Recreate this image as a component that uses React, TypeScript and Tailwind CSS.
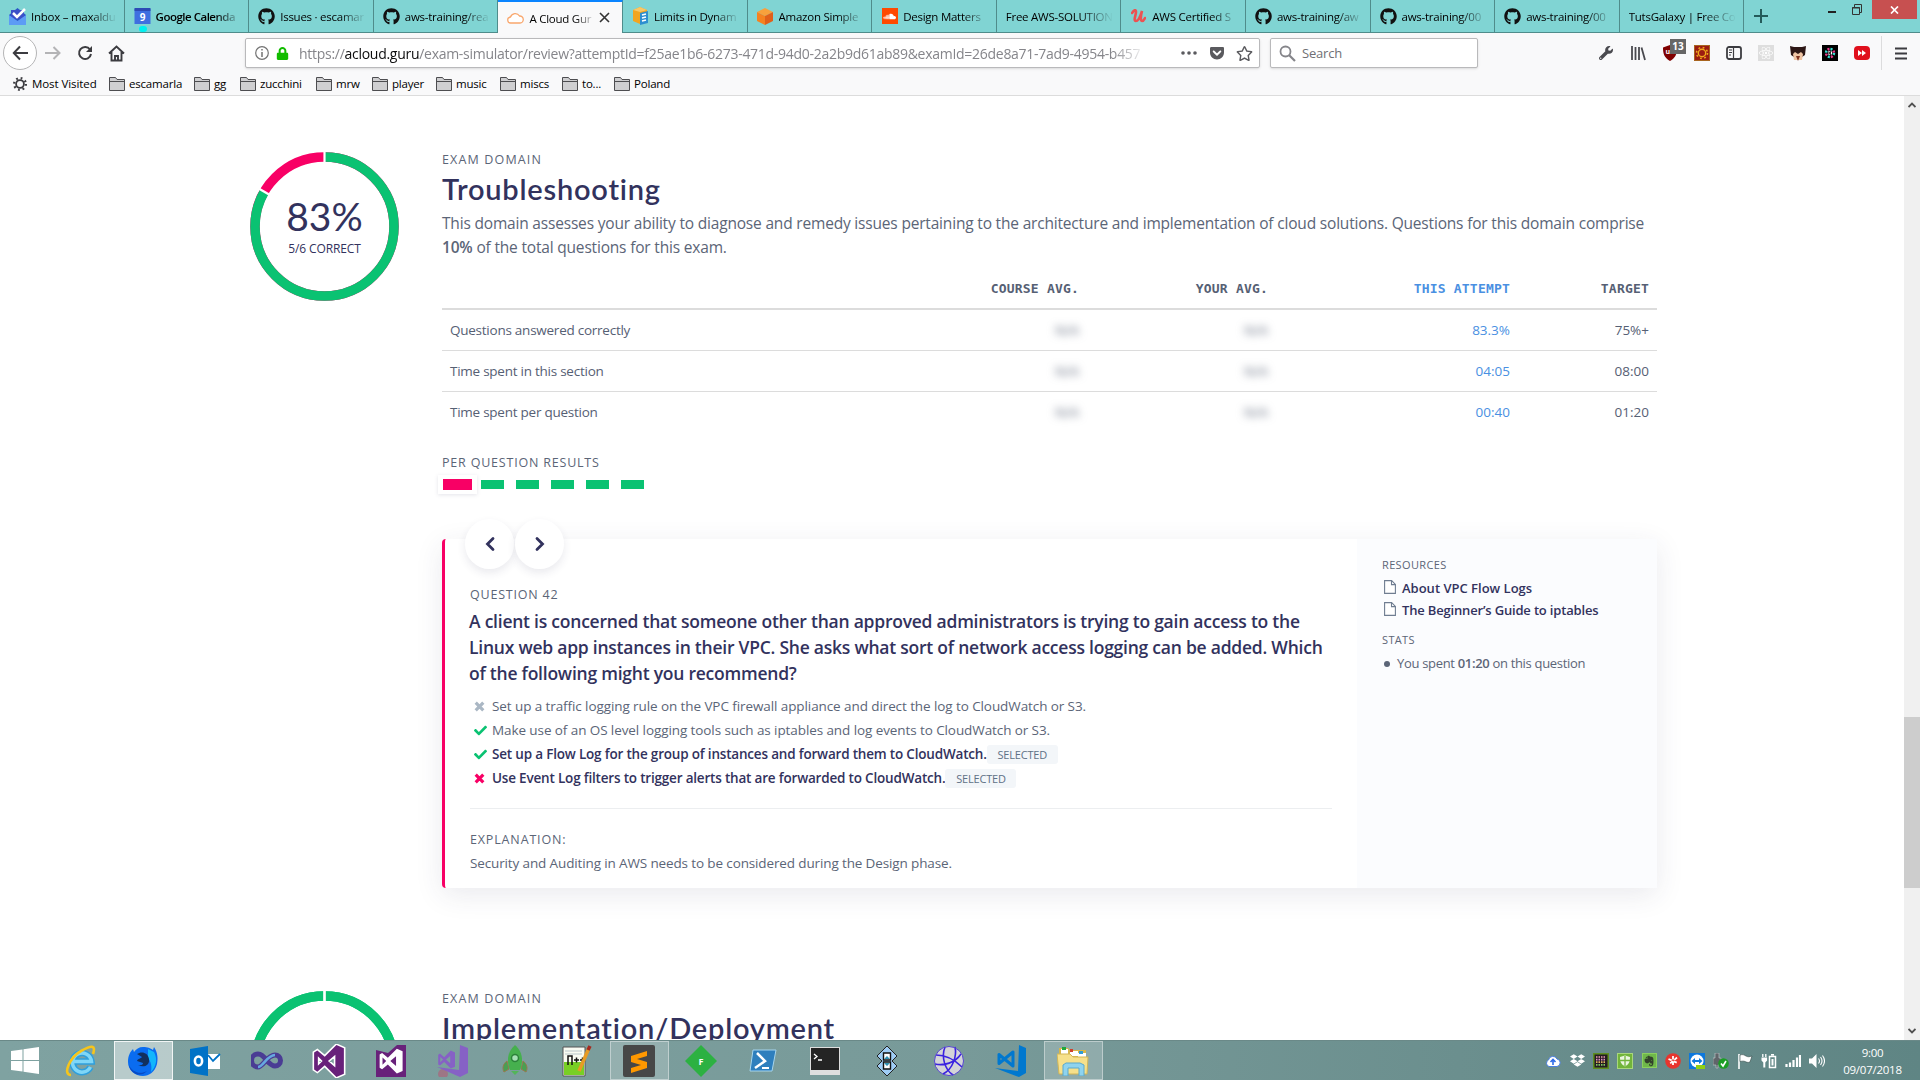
import React from "react";
import { FaGithub, FaDropbox, FaSoundcloud, FaEvernote, FaCheck, FaGetPocket, FaLock, FaReact, FaRegStar, FaWrench } from "react-icons/fa";

const UI = "font-['Open_Sans','Noto_Sans',sans-serif]";

/* ---------- Browser tabs ---------- */

function InboxIcon() {
  return (
    <svg width="17" height="17" viewBox="0 0 17 17">
      <path d="M0 7l8.500-7L17 7v10H0z" fill="#2a56c6" />
      <path d="M2 2h13v9H2z" fill="#3c50c8" />
      <path d="M0 7l8.500 6L17 7v10H0z" fill="#5c9cf5" />
      <path d="M4 5l4 4 8-8" stroke="#fff" strokeWidth="2.500" fill="none" />
    </svg>
  );
}
function CalendarIcon() {
  return (
    <svg width="17" height="17" viewBox="0 0 17 17">
      <rect x="0.500" y="1" width="16" height="15" fill="#3f6fe0" />
      <rect x="0.500" y="0" width="16" height="3" fill="#2d4bb5" />
      <text x="8.500" y="12.500" fontSize="10" fontWeight="700" textAnchor="middle" fill="#fff" fontFamily="Open Sans">9</text>
    </svg>
  );
}
function CloudIcon() {
  return (
    <svg width="17" height="12" viewBox="0 0 17 12">
      <path d="M4 11a3 3 0 0 1-.5-6A5 5 0 0 1 12.500 4 3.500 3.500 0 0 1 13 11z" fill="#fff" stroke="#f9a66c" strokeWidth="1.300" />
    </svg>
  );
}
function DynamoIcon() {
  return (
    <svg width="17" height="18" viewBox="0 0 17 18">
      <path d="M1 3l7-3 7 3v11l-7 3-7-3z" fill="#f2a51f" />
      <path d="M1 3l7 2 7-2-7-3z" fill="#f9c766" />
      <path d="M8 6l8-2v12l-8 2z" fill="#2d8fd0" />
      <path d="M10 8l4-1M10 11l4-1M10 14l4-1" stroke="#fff" strokeWidth="1.400" />
    </svg>
  );
}
function CubeIcon() {
  return (
    <svg width="16" height="17" viewBox="0 0 16 17">
      <path d="M8 0l8 4-8 4-8-4z" fill="#f8a13c" />
      <path d="M0 4l8 4v9l-8-4z" fill="#f58220" />
      <path d="M16 4L8 8v9l8-4z" fill="#e0601a" />
    </svg>
  );
}
function UdemyIcon() {
  return (
    <svg width="15" height="14" viewBox="0 0 15 14">
      <path d="M1 4c2-3 4-4 4-1S2 12 5 12s5-7 6-10c-1 4-2 10 0 10 1 0 2-1 3-3" stroke="#ec5252" strokeWidth="2.600" fill="none" strokeLinecap="round" />
    </svg>
  );
}

type TabData = { label: string; icon?: React.ReactNode; bold?: boolean; active?: boolean };
const tabs: TabData[] = [
  { label: "Inbox – maxaldu", icon: <InboxIcon /> },
  { label: "Google Calenda", icon: <CalendarIcon />, bold: true },
  { label: "Issues · escamar", icon: <FaGithub size={17} /> },
  { label: "aws-training/rea", icon: <FaGithub size={17} /> },
  { label: "A Cloud Gur", icon: <CloudIcon />, active: true },
  { label: "Limits in Dynam", icon: <DynamoIcon /> },
  { label: "Amazon Simple", icon: <CubeIcon /> },
  {
    label: "Design Matters",
    icon: (
      <span className="flex h-4 w-4 items-center justify-center bg-[#ff4a00] text-white">
        <FaSoundcloud size={13} />
      </span>
    ),
  },
  { label: "Free AWS-SOLUTION" },
  { label: "AWS Certified S", icon: <UdemyIcon /> },
  { label: "aws-training/aw", icon: <FaGithub size={17} /> },
  { label: "aws-training/00", icon: <FaGithub size={17} /> },
  { label: "aws-training/00", icon: <FaGithub size={17} /> },
  { label: "TutsGalaxy | Free Co" },
];

function Tab({ t }: { t: TabData }) {
  return (
    <div
      className={
        "relative flex h-[33px] w-[124.600px] shrink-0 items-center border-r border-[#4f8c8b] pl-[9px] " +
        (t.active ? "border-t-2 border-t-[#0a84ff] bg-[#f9f9fa]" : "border-b border-b-[#4f8c8b]")
      }
    >
      {t.icon && <span className="mr-[5px] flex w-[17px] shrink-0 justify-center text-[#111]">{t.icon}</span>}
      <span
        className={
          "min-w-0 flex-1 overflow-hidden pt-[2px] text-[11.500px] leading-5 whitespace-nowrap text-black [mask-image:linear-gradient(to_right,#000_70%,transparent_101%)] " +
          (t.bold ? "font-semibold tracking-[-0.500px] " : "tracking-[-0.250px] ") +
          (t.active ? "mr-1" : "mr-[8px]")
        }
      >
        {t.label}
      </span>
      {t.active && (
        <svg className="mr-[12px]" width="11" height="11" viewBox="0 0 11 11">
          <path d="M1 1l9 9M10 1l-9 9" stroke="#333" strokeWidth="1.600" />
        </svg>
      )}
      {t.bold && <span className="absolute bottom-0 left-[14px] h-[6px] w-[8px] rounded-full bg-[#00f0f0]" />}
    </div>
  );
}

function TabBar() {
  return (
    <div className="flex h-[33px] bg-[#80d4d3]">
      {tabs.map((t, i) => (
        <Tab key={i} t={t} />
      ))}
      <div className="flex h-[33px] flex-1 items-start justify-between border-b border-[#4f8c8b]">
        <svg className="mt-[9px] ml-[10px]" width="14" height="14" viewBox="0 0 14 14">
          <path d="M7 0v14M0 7h14" stroke="#245b5a" strokeWidth="2" />
        </svg>
        <div className="flex">
          <svg className="mt-[3px] mr-[4px]" width="42" height="14" viewBox="0 0 42 14">
            <path d="M2 9h8" stroke="#222" strokeWidth="2" />
            <path d="M28.500 4v-2.500h7v8H34M26.500 4.500h7v7h-7z" stroke="#333" fill="none" />
            <path d="M26 5h8" stroke="#333" />
          </svg>
          <div className="mr-[3px] flex h-[19px] w-[45px] items-center justify-center bg-[#c75050]">
            <svg width="9" height="8" viewBox="0 0 9 8">
              <path d="M1 0.500l7 7M8 0.500l-7 7" stroke="#fff" strokeWidth="1.700" />
            </svg>
          </div>
        </div>
      </div>
    </div>
  );
}

/* ---------- Navigation toolbar ---------- */

const extensions: React.ReactNode[] = [
  <FaWrench size={14} color="#4a4a4f" />,
  <svg width="16" height="16" viewBox="0 0 16 16">
    <path d="M2 1v14M5.500 2v13M9 2v13M11.500 2.500l3.500 12.500" stroke="#4a4a4f" strokeWidth="1.800" />
  </svg>,
  <span className="relative">
    <svg width="16" height="16" viewBox="0 0 16 16">
      <path d="M8 0l7 2.500c0 6-1 10-7 13.500C2 12.500 1 8.500 1 2.500z" fill="#800000" />
      <text x="3.500" y="9" fontSize="7" fontWeight="700" fill="#fff" fontFamily="Open Sans">u</text>
    </svg>
    <span className="absolute -top-[6px] left-2 flex h-[15px] w-4 items-center justify-center bg-[#666] text-[10px] font-bold text-white">13</span>
  </span>,
  <svg width="16" height="16" viewBox="0 0 16 16">
    <rect width="16" height="16" fill="#a8651f" />
    <rect x="1" y="1" width="14" height="14" fill="#9b1c12" />
    <circle cx="8" cy="8" r="3.700" fill="none" stroke="#f0a81c" strokeWidth="1.400" />
    <circle cx="8" cy="8" r="5.500" fill="none" stroke="#f0a81c" strokeWidth="1.500" strokeDasharray="1.800 2.520" />
  </svg>,
  <svg width="16" height="14" viewBox="0 0 16 14">
    <rect x="1" y="1" width="14" height="12" rx="2" fill="none" stroke="#3c3c40" strokeWidth="1.800" />
    <path d="M7.500 1v12M3 4h3M3 6.500h3M3 9h2" stroke="#3c3c40" strokeWidth="1.200" />
  </svg>,
  <span className="flex h-4 w-4 items-center justify-center bg-[#dedede] text-white">
    <FaReact size={14} />
  </span>,
  <svg width="16" height="16" viewBox="0 0 16 16">
    <path d="M0 1l4 1h8l4-1-1 9-3 2H4L1 10z" fill="#2d1715" />
    <path d="M3 9l2-2 3 2 3-2 2 2-1 6H4z" fill="#efc5a4" />
    <path d="M6 11h4l-2 5z" fill="#80331f" />
  </svg>,
  <svg width="16" height="16" viewBox="0 0 16 16">
    <rect width="16" height="16" fill="#000" />
    <circle cx="8" cy="8" r="4" fill="none" stroke="#38dfd4" strokeWidth="2.500" strokeDasharray="2 4.280" />
    <circle cx="8" cy="8" r="4" fill="none" stroke="#e83e8c" strokeWidth="2.500" strokeDasharray="2 4.280" strokeDashoffset="3" />
    <circle cx="8" cy="8" r="1.600" fill="none" stroke="#fff" strokeWidth="1.200" strokeDasharray="1.500 1" />
  </svg>,
  <svg width="16" height="14" viewBox="0 0 16 14">
    <rect width="16" height="14" rx="4" fill="#e0101c" />
    <path d="M4 4l4 3-4 3zM8 4l4 3-4 3z" fill="#fff" />
  </svg>,
];

function NavBar() {
  return (
    <div className="flex h-10 items-center bg-[#f9f9fa]">
      <div className="ml-[3px] flex h-[34px] w-[34px] items-center justify-center rounded-full border border-[#b5b5b6] bg-white">
        <svg width="17" height="16" viewBox="0 0 17 16">
          <path d="M8 1.500L1.800 8 8 14.500M2 8h14" stroke="#3c3c40" strokeWidth="2" fill="none" />
        </svg>
      </div>
      <svg className="ml-2" width="16" height="16" viewBox="0 0 16 16">
        <path d="M8.500 2l6 6-6 6M0 8h14" stroke="#b4b4b6" strokeWidth="2" fill="none" />
      </svg>
      <svg className="ml-[16px]" width="16" height="16" viewBox="0 0 16 16">
        <path d="M13 4.500A6 6 0 1 0 14 9" stroke="#3c3c40" strokeWidth="2" fill="none" />
        <path d="M15 1v6H9z" fill="#3c3c40" />
      </svg>
      <svg className="ml-[15px]" width="17" height="17" viewBox="0 0 17 17">
        <path d="M1 8.500L8.500 1.500 16 8.500M3.500 7v8.500h10V7M7 15v-4h3v4" stroke="#3c3c40" strokeWidth="1.900" fill="none" />
      </svg>
      <div className="ml-[120px] flex h-[30px] w-[1015px] items-center rounded-[2px] border border-[#b9b9bb] bg-white pl-[9px] shadow-sm">
        <svg width="14" height="14" viewBox="0 0 14 14">
          <circle cx="7" cy="7" r="6.300" stroke="#737373" fill="none" strokeWidth="1.200" />
          <path d="M7 6v5M7 3v1.600" stroke="#737373" strokeWidth="1.500" />
        </svg>
        <FaLock className="ml-[7px]" size={13} color="#12bc00" />
        <div className="ml-[10px] w-[847px] overflow-hidden pt-[2px] text-[14px] leading-6 tracking-[-0.280px] whitespace-nowrap text-[#85858a] [mask-image:linear-gradient(to_right,#000_96%,transparent_100%)]">
          https://<span className="text-[#0c0c0d]">acloud.guru</span>
          /exam-simulator/review?attemptId=f25ae1b6-6273-471d-94d0-2a2b9d61ab89&examId=26de8a71-7ad9-4954-b457
        </div>
        <svg className="ml-[35px]" width="16" height="4" viewBox="0 0 16 4">
          <circle cx="2" cy="2" r="1.800" fill="#5a5a5e" />
          <circle cx="8" cy="2" r="1.800" fill="#5a5a5e" />
          <circle cx="14" cy="2" r="1.800" fill="#5a5a5e" />
        </svg>
        <FaGetPocket className="ml-[12px]" size={16} color="#5a5a5e" />
        <FaRegStar className="ml-[11px]" size={17} color="#5a5a5e" />
      </div>
      <div className="ml-[10px] flex h-[30px] w-[208px] items-center rounded-[2px] border border-[#b9b9bb] bg-white pl-2 shadow-sm">
        <svg width="17" height="17" viewBox="0 0 17 17">
          <circle cx="6.500" cy="6.500" r="5" stroke="#85858a" strokeWidth="1.800" fill="none" />
          <path d="M10 10l6 6" stroke="#85858a" strokeWidth="2.200" />
        </svg>
        <span className="ml-[6px] pt-[2px] text-[13px] tracking-[-0.200px] text-[#6f6f74]">Search</span>
      </div>
      <div className="ml-[112px] flex">
        {extensions.map((icon, i) => (
          <div key={i} className="flex h-8 w-8 items-center justify-center">
            {icon}
          </div>
        ))}
      </div>
      <div className="ml-[3px] h-[34px] w-px bg-[#dcdcdd]" />
      <svg className="ml-[13px]" width="12" height="13" viewBox="0 0 12 13">
        <path d="M0 1.500h12M0 6.500h12M0 11.500h12" stroke="#3c3c40" strokeWidth="2" />
      </svg>
    </div>
  );
}

function Folder() {
  return (
    <svg width="16" height="14" viewBox="0 0 16 14">
      <path d="M0.500 13.500v-13h6l1.500 2h7.500v11z" fill="#cfcfd1" stroke="#4d4d50" />
      <path d="M1 4.500h14" stroke="#4d4d50" />
    </svg>
  );
}

function Bookmark({ label, width }: { label: string; width: string }) {
  return (
    <div className={"flex shrink-0 items-center gap-1 " + width}>
      <Folder />
      <span className="tracking-[-0.200px]">{label}</span>
    </div>
  );
}

function BookmarksBar() {
  return (
    <div className="flex h-[23px] items-center border-b border-[#dcdcdc] bg-[#f9f9fa] pl-[13px] text-[11.500px] whitespace-nowrap text-black">
      <div className="flex w-[96px] items-center gap-[5px]">
        <svg width="14" height="14" viewBox="0 0 14 14">
          <circle cx="7" cy="7" r="3.900" fill="none" stroke="#3c3c40" strokeWidth="1.800" />
          <circle cx="7" cy="7" r="5.900" fill="none" stroke="#3c3c40" strokeWidth="2.200" strokeDasharray="1.800 2.830" />
        </svg>
        <span className="tracking-[-0.080px]">Most Visited</span>
      </div>
      <Bookmark label="escamarla" width="w-[85px]" />
      <Bookmark label="gg" width="w-[46px]" />
      <Bookmark label="zucchini" width="w-[76px]" />
      <Bookmark label="mrw" width="w-[56px]" />
      <Bookmark label="player" width="w-[64px]" />
      <Bookmark label="music" width="w-[64px]" />
      <Bookmark label="miscs" width="w-[62px]" />
      <Bookmark label="to..." width="w-[52px]" />
      <Bookmark label="Poland" width="w-[60px]" />
    </div>
  );
}

/* ---------- Page ---------- */

const GREEN = "#0ac272";
const RED = "#f80065";

function Ring({ percent, children }: { percent: number; children?: React.ReactNode }) {
  const r = 69.5;
  const c = 2 * Math.PI * r;
  const a = (percent / 100) * 2 * Math.PI;
  const at = (rad: number) => `${74.5 + rad * Math.sin(a)} ${74.5 - rad * Math.cos(a)}`;
  return (
    <div className="mt-[3px] grid h-[149px] w-[149px] shrink-0 place-items-center">
      <svg className="col-start-1 row-start-1" width="149" height="149" viewBox="0 0 149 149">
        <circle cx="74.500" cy="74.500" r={r} fill="none" stroke={percent < 100 ? RED : GREEN} strokeWidth="9.500" />
        <circle cx="74.500" cy="74.500" r={r} fill="none" stroke={GREEN} strokeWidth="9.500" strokeDasharray={`${(c * percent) / 100} ${c}`} transform="rotate(-90 74.500 74.500)" />
        <path d="M74.500 0v12" stroke="#fff" strokeWidth="2.200" />
        <path d={`M${at(63)}L${at(76)}`} stroke="#fff" strokeWidth="2.200" />
      </svg>
      <div className="col-start-1 row-start-1 text-center">{children}</div>
    </div>
  );
}

function Caption({ children, className = "" }: { children: React.ReactNode; className?: string }) {
  return <div className={"h-5 leading-[22px] whitespace-nowrap text-[#5b6577] " + className}>{children}</div>;
}

const rows = [
  ["Questions answered correctly", "83.3%", "75%+"],
  ["Time spent in this section", "04:05", "08:00"],
  ["Time spent per question", "00:40", "01:20"],
];
const GRID = "grid grid-cols-[456px_189px_189px_242px_139px]";

function ResultsTable() {
  return (
    <div className="w-[1215px] text-[#566074]">
      <div className={GRID + " mt-px h-[50px] border-b-2 border-[#dcdcdc] pt-[19px] text-right font-['DejaVu_Sans_Mono',monospace] text-[13px] leading-5 font-bold tracking-[0.200px] whitespace-nowrap"}>
        <span />
        <span className="pr-2">COURSE AVG.</span>
        <span className="pr-2">YOUR AVG.</span>
        <span className="pr-2 text-[#4a90e2]">THIS ATTEMPT</span>
        <span className="pr-2">TARGET</span>
      </div>
      {rows.map(([label, attempt, target], i) => (
        <div key={i} className={GRID + " h-[41px] text-right text-[13.500px] leading-10 " + (i < 2 ? "border-b border-[#dcdcdc]" : "")}>
          <span className="pl-2 text-left tracking-[-0.250px]">{label}</span>
          <span className="pr-2 text-[13.500px] blur-[4px]">N/A</span>
          <span className="pr-2 text-[13.500px] blur-[4px]">N/A</span>
          <span className="pr-2 text-[#4a90e2]">{attempt}</span>
          <span className="pr-2">{target}</span>
        </div>
      ))}
    </div>
  );
}

function NavCircle({ d }: { d: string }) {
  return (
    <div className="flex h-[50px] w-[49px] items-center justify-center rounded-full bg-white shadow-[0_4px_9px_rgba(50,50,93,0.10)]">
      <svg width="12" height="16" viewBox="0 0 12 16">
        <path d={d} stroke="#32325d" strokeWidth="2.800" fill="none" strokeLinecap="round" />
      </svg>
    </div>
  );
}

function Cross({ color }: { color: string }) {
  return (
    <svg width="11" height="11" viewBox="0 0 11 11">
      <path d="M1.700 1.700l7.600 7.600M9.300 1.700L1.700 9.300" stroke={color} strokeWidth="3.200" />
    </svg>
  );
}

function Answer({ icon, text, selected }: { icon: React.ReactNode; text: string; selected?: boolean }) {
  return (
    <div className="flex h-6 items-center text-[13.500px] leading-6 whitespace-nowrap">
      <span className="ml-1 w-[18px]">{icon}</span>
      <span className={selected ? "font-semibold tracking-[-0.190px] text-[#32325d]" : "tracking-[-0.090px] text-[#5b6577]"}>{text}</span>
      {selected && (
        <span className="h-[19px] w-[71px] rounded-[3px] bg-[#f3f6f9] text-center text-[11px] leading-[19px] tracking-[-0.200px] text-[#5f7186]">SELECTED</span>
      )}
    </div>
  );
}

function DocIcon() {
  return (
    <svg className="mb-[5px]" width="12" height="14" viewBox="0 0 12 14">
      <path d="M0.600 0.600h7l3.800 3.800v9H0.600z" fill="#fff" stroke="#6f7d91" strokeWidth="1.100" />
      <path d="M7.500 0.600v4h4" fill="none" stroke="#6f7d91" strokeWidth="1.100" />
    </svg>
  );
}

function QuestionCard() {
  return (
    <div className="relative mt-[45px] flex h-[349px] w-[1215px] rounded-[4px] border-l-[3px] border-[#f80065] bg-white shadow-[0_7px_28px_rgba(50,50,93,0.10)]">
      <div className="absolute -top-[20px] left-[20px] flex gap-[1px]">
        <NavCircle d="M9 2.500L3.500 8 9 13.500" />
        <NavCircle d="M3 2.500L8.500 8 3 13.500" />
      </div>
      <div className="w-[912px] px-[25px] pt-[45px]">
        <Caption className="text-[12.500px] tracking-[0.800px]">QUESTION 42</Caption>
        <div className="mt-1 -ml-px text-[17.500px] leading-[26px] font-semibold tracking-[-0.235px] whitespace-nowrap text-[#32325d]">
          A client is concerned that someone other than approved administrators is trying to gain access to the
          <br />
          Linux web app instances in their VPC. She asks what sort of network access logging can be added. Which
          <br />
          of the following might you recommend?
        </div>
        <div className="mt-2">
          <Answer icon={<Cross color="#aab7c4" />} text="Set up a traffic logging rule on the VPC firewall appliance and direct the log to CloudWatch or S3." />
          <Answer icon={<FaCheck size={13} color={GREEN} />} text="Make use of an OS level logging tools such as iptables and log events to CloudWatch or S3." />
          <Answer selected icon={<FaCheck size={13} color={GREEN} />} text="Set up a Flow Log for the group of instances and forward them to CloudWatch." />
          <Answer selected icon={<Cross color={RED} />} text="Use Event Log filters to trigger alerts that are forwarded to CloudWatch." />
        </div>
        <div className="mt-[18px] h-px bg-[#eceef0]" />
        <Caption className="mt-5 text-[12.500px] tracking-[0.850px]">EXPLANATION:</Caption>
        <div className="mt-[2px] text-[13.500px] leading-6 tracking-[-0.130px] whitespace-nowrap text-[#5b6577]">
          Security and Auditing in AWS needs to be considered during the Design phase.
        </div>
      </div>
      <div className="w-[300px] bg-[#fbfcfe] pt-4 pl-[25px] whitespace-nowrap">
        <div className="h-5 text-[11px] leading-5 tracking-[0.350px] text-[#5b6577]">RESOURCES</div>
        <div className="mt-[3px] pl-[2px] text-[13px] font-semibold text-[#32325d]">
          <div className="flex h-[22px] items-center gap-[6px]">
            <DocIcon />
            <span>About VPC Flow Logs</span>
          </div>
          <div className="flex h-[22px] items-center gap-[6px]">
            <DocIcon />
            <span className="tracking-[-0.170px]">The Beginner’s Guide to iptables</span>
          </div>
        </div>
        <div className="mt-[8px] h-5 text-[11px] leading-5 tracking-[0.350px] text-[#5b6577]">STATS</div>
        <div className="mt-[2px] flex h-6 items-center gap-[7px] pl-[2px] text-[13px] tracking-[-0.320px] text-[#5b6577]">
          <span className="h-[6px] w-[6px] rounded-full bg-[#5b6577]" />
          <span>
            You spent <span className="font-semibold">01:20</span> on this question
          </span>
        </div>
      </div>
    </div>
  );
}

function DomainTitle({ children }: { children: React.ReactNode }) {
  return <h2 className="mt-[2px] h-9 font-['Lato',sans-serif] text-[29px] leading-[36px] font-semibold tracking-[0.780px] whitespace-nowrap text-[#32325d]">{children}</h2>;
}

function Page() {
  return (
    <div className="flex h-[944px] overflow-hidden bg-white">
      <main className="h-[944px] flex-1 overflow-hidden pt-[53px] pl-[250px]">
        <section className="flex gap-[42px]">
          <Ring percent={83.333}>
            <div className="mt-[-1px] font-['Lato',sans-serif] text-[39px] leading-10 text-[#32325d]">83%</div>
            <div className="mt-[5px] text-[12px] leading-4 tracking-[-0.100px] text-[#32325d]">5/6 CORRECT</div>
          </Ring>
          <div className="w-[1216px] pl-px">
            <Caption className="text-[12.500px] tracking-[1.150px]">EXAM DOMAIN</Caption>
            <DomainTitle>Troubleshooting</DomainTitle>
            <p className="mt-1 text-[15.500px] leading-6 tracking-[-0.185px] whitespace-nowrap text-[#5b6577]">
              This domain assesses your ability to diagnose and remedy issues pertaining to the architecture and implementation of cloud solutions. Questions for this domain comprise
              <br />
              <span className="font-semibold">10%</span> of the total questions for this exam.
            </p>
            <ResultsTable />
            <Caption className="mt-[19px] text-[12.500px] tracking-[0.800px]">PER QUESTION RESULTS</Caption>
            <div className="mt-[3px] -ml-1 flex h-[19px] items-center gap-3">
              <div className="-mr-2 flex h-[19px] w-[39px] items-center justify-center bg-white shadow-[0_1px_4px_rgba(50,50,93,0.13)]">
                <div className="h-[11px] w-[29px] bg-[#f80065]" />
              </div>
              {[1, 2, 3, 4, 5].map((i) => (
                <div key={i} className="h-[9px] w-[23px] bg-[#0ac272]" />
              ))}
            </div>
            <QuestionCard />
          </div>
        </section>
        <section className="mt-[100px] flex gap-[42px]">
          <Ring percent={100} />
          <div className="pl-px">
            <Caption className="text-[12.500px] tracking-[1.150px]">EXAM DOMAIN</Caption>
            <DomainTitle>Implementation/Deployment</DomainTitle>
          </div>
        </section>
      </main>
      <div className="flex w-4 flex-col items-center bg-[#f0f0f0] py-[6px]">
        <svg width="8" height="6" viewBox="0 0 8 6">
          <path d="M0.500 5L4 1.500 7.500 5" stroke="#505050" strokeWidth="1.800" fill="none" />
        </svg>
        <div className="mt-[609px] h-[171px] w-4 bg-[#cdcdcd]" />
        <svg className="mt-auto" width="8" height="6" viewBox="0 0 8 6">
          <path d="M0.500 1L4 4.500 7.500 1" stroke="#505050" strokeWidth="1.800" fill="none" />
        </svg>
      </div>
    </div>
  );
}

/* ---------- Taskbar ---------- */

const VS_MARK = "M23 1l7 3v24l-7 3-11-11-7 6-3-2V8l3-2 7 6zM22 10l-7 6 7 6zM5.500 11.500v9l4.500-4.500z";

const apps: { icon: React.ReactNode; state?: "active" | "open" }[] = [
  {
    icon: (
      <svg width="28" height="27" viewBox="0 0 28 27">
        <path d="M0 4l11.500-1.600V13H0zM12.500 2.200L28 0v13H12.500zM0 14h11.500v10.600L0 23zM12.500 14H28v13l-15.500-2.200z" fill="#fff" />
      </svg>
    ),
  },
  {
    icon: (
      <svg width="32" height="32" viewBox="0 0 32 32">
        <path d="M25.500 22a9.500 9.500 0 1 1 1-5.500H9" fill="none" stroke="#2f9fdc" strokeWidth="6.500" />
        <path d="M25.500 22a9.500 9.500 0 1 1 1-5.500H9" fill="none" stroke="#7fd6f7" strokeWidth="3.500" />
        <path d="M6 30C-3 30 5 12 16 6S31 0 28 9" fill="none" stroke="#f6c51c" strokeWidth="2.600" />
      </svg>
    ),
  },
  {
    state: "active",
    icon: (
      <svg width="32" height="32" viewBox="0 0 32 32">
        <path d="M16 2c5 0 7 1 10 3l1-3c4 6 4 12 3 17-2 8-8 12-14 12C8 31 1 25 1 17 1 11 3 7 6 4l1 3c2-3 5-5 9-5z" fill="#0a6cf0" />
        <path d="M21 4l6 3c4 7 2 15-3 20 1-6 0-10-3-14z" fill="#12b6fb" />
        <path d="M10 9c4-3 11-2 12 5s-6 9-11 6c4 1 5-1 5-2l-6-2c1-3 4-2 5-4z" fill="#12305e" />
        <path d="M2 20c3 7 11 10 18 6-6 7-17 3-18-6z" fill="#084bc4" />
      </svg>
    ),
  },
  {
    icon: (
      <svg width="32" height="32" viewBox="0 0 32 32">
        <path d="M1 4l18-3v30L1 28z" fill="#0072c6" />
        <path d="M19 9h12v15H19z" fill="#fff" />
        <path d="M19 10l5 6 7-7" fill="none" stroke="#0072c6" strokeWidth="1.800" />
        <ellipse cx="9.500" cy="16" rx="3.600" ry="4.500" fill="none" stroke="#fff" strokeWidth="2.600" />
      </svg>
    ),
  },
  {
    icon: (
      <svg width="32" height="20" viewBox="0 0 32 20">
        <path d="M16 10C12 4 9 3 7 3a6 6 0 1 0 0 13c5 0 9-12 17-12a5.500 5.500 0 0 1 0 11c-3 0-5-2-8-5z" fill="none" stroke="#4a3c94" strokeWidth="5" />
        <path d="M7 16c5 0 9-12 17-12" fill="none" stroke="#66a8e0" strokeWidth="2.600" />
      </svg>
    ),
  },
  {
    icon: (
      <svg width="34" height="34" viewBox="0 0 32 32">
        <path d={VS_MARK} fill="#fff" stroke="#fff" strokeWidth="3" />
        <path d={VS_MARK} fill="#68217a" fillRule="evenodd" />
      </svg>
    ),
  },
  {
    icon: (
      <svg width="32" height="32" viewBox="0 0 32 32">
        <path d="M1 5l12 3L22 0h9v32H1z" fill="#68217a" />
        <path d={VS_MARK} fill="#fff" fillRule="evenodd" transform="translate(3 3) scale(.82)" />
      </svg>
    ),
  },
  {
    icon: (
      <svg width="32" height="32" viewBox="0 0 32 32">
        <circle cx="6" cy="29" r="5" fill="#a56c80" opacity=".8" />
        <path d="M23 0l8 3v25l-8 4L0 22l22 3z" fill="#8661c5" />
        <path d={VS_MARK} fill="#8661c5" fillRule="evenodd" transform="translate(0 5) scale(.6)" />
      </svg>
    ),
  },
  {
    icon: (
      <svg width="26" height="32" viewBox="0 0 26 32">
        <path d="M5 16c-4 3-5 7-3 11l5-3zM21 16c4 3 5 7 3 11l-5-3z" fill="#4a9f52" stroke="#97774f" />
        <path d="M13 0c7 6 9 15 5 25H8C4 15 6 6 13 0z" fill="#46b04e" />
        <circle cx="13" cy="13" r="3.500" fill="#a5e0b4" stroke="#2c8239" strokeWidth="1.500" />
        <path d="M9 26h8l-4 4z" fill="#53b558" />
      </svg>
    ),
  },
  {
    icon: (
      <svg width="30" height="32" viewBox="0 0 30 32">
        <path d="M1 2h22v29H1z" fill="#f8fbf2" stroke="#555" />
        <path d="M2 17h20v13H2z" fill="#78cf25" />
        <path d="M3 6h17M3 9h17" stroke="#b9c6c9" />
        <path d="M6 20v-9h4v9M12 15h5M14.500 12.500v5M18 15h5M20.500 12.500v5" stroke="#111" strokeWidth="1.500" fill="none" />
        <path d="M27 3L17 26" stroke="#e79b24" strokeWidth="3.500" />
        <path d="M28 1l-2 4" stroke="#a32a22" strokeWidth="3.500" />
      </svg>
    ),
  },
  {
    state: "open",
    icon: (
      <svg width="32" height="32" viewBox="0 0 32 32">
        <rect width="32" height="32" rx="2" fill="#474747" />
        <path d="M24 6L8 11v6l10 3-10 3v5l16-5v-6l-10-3 10-3z" fill="#ff9800" />
      </svg>
    ),
  },
  {
    icon: (
      <svg width="32" height="32" viewBox="0 0 32 32">
        <path d="M16 0l16 16-16 16L0 16z" fill="#2cb142" />
        <text x="16" y="19.500" fontSize="9" fontWeight="700" textAnchor="middle" fill="#fff" fontFamily="Open Sans">F</text>
      </svg>
    ),
  },
  {
    icon: (
      <svg width="28" height="24" viewBox="0 0 28 24">
        <path d="M4 1h23l-4 21H1z" fill="#2e7fbd" stroke="#a5d5ee" />
        <path d="M8 4l8 8-10 7" fill="none" stroke="#fff" strokeWidth="2.500" />
        <path d="M13 19h7" stroke="#fff" strokeWidth="2" />
      </svg>
    ),
  },
  {
    icon: (
      <svg width="30" height="28" viewBox="0 0 30 28">
        <rect width="30" height="28" fill="#dedede" />
        <rect x="1" y="1" width="28" height="22" fill="#242424" />
        <path d="M4 7l3 2.500-3 2.500M8 13h4" stroke="#fff" strokeWidth="1.300" fill="none" />
      </svg>
    ),
  },
  {
    icon: (
      <svg width="22" height="32" viewBox="0 0 22 32">
        <path d="M11 1l10 10-5 5 5 5-10 10L1 21l5-5-5-5z" fill="#9fcdf5" stroke="#222" />
        <path d="M7.500 8h7v7h-7zM7.500 17h7v7h-7z" fill="#fff" stroke="#111" strokeWidth="1.400" />
        <path d="M8 14l3-3 3 3zM8 18l3 3 3-3z" fill="#2f8fb0" />
      </svg>
    ),
  },
  {
    icon: (
      <svg width="32" height="32" viewBox="0 0 32 32">
        <circle cx="16" cy="16" r="14.500" fill="#d4d4d8" />
        <path d="M3 10c9 0 19 5 26 12M2 19c9 2 20-1 26-10M12 2C8 12 12 25 20 30M22 2c2 9-2 22-12 27" stroke="#3a22e0" strokeWidth="1.600" fill="none" />
        <circle cx="16" cy="16" r="14.500" fill="none" stroke="#5546cf" />
      </svg>
    ),
  },
  {
    icon: (
      <svg width="32" height="32" viewBox="0 0 32 32">
        <path d="M24 0l7 3v25l-7 4L0 23l23 3z" fill="#0078cf" />
        <path d="M18 7v14L4 9.500v9L18 7z" fill="none" stroke="#0078cf" strokeWidth="3" strokeLinejoin="round" />
      </svg>
    ),
  },
  {
    state: "open",
    icon: (
      <svg width="32" height="30" viewBox="0 0 32 30">
        <path d="M2 2h9l2 2h16v9H2z" fill="#d8b64a" />
        <path d="M4 3h7v5H4zM13 5h8v5h-8zM21 7h8v5h-8z" fill="#fff" />
        <path d="M5 1h4v3H5z" fill="#1ea83c" />
        <path d="M13 3h3v3h-3z" fill="#d1402c" />
        <path d="M22 5h4v3h-4z" fill="#2c9cd8" />
        <path d="M0 8h13l3 3h15l-1 17H2z" fill="#f6e08b" stroke="#d2b657" />
        <path d="M6 30V19l3-2h14l4 2v11h-5v-8H11v8z" fill="#8fd3ee" stroke="#5aa9cc" />
      </svg>
    ),
  },
];

const trayIcons: React.ReactNode[] = [
  <svg width="16" height="12" viewBox="0 0 16 12">
    <path d="M4 11.500a3.500 3.500 0 0 1-.5-6.500A4.500 4.500 0 0 1 12 4a3.800 3.800 0 0 1 0 7.500z" fill="#fff" stroke="#4a7fe0" />
    <path d="M8 10V4.500M5.500 7L8 4.500 10.500 7" stroke="#2f6be8" strokeWidth="1.600" fill="none" />
  </svg>,
  <FaDropbox size={15} color="#fff" />,
  <svg width="16" height="16" viewBox="0 0 16 16">
    <rect width="16" height="16" fill="#5e8f1e" />
    <rect x="1.500" y="1.500" width="13" height="13" fill="#241c22" />
    <path d="M3 4h10" stroke="#f0a0b0" strokeDasharray="1.500 1" strokeWidth="1.700" />
    <path d="M3 6.600h10" stroke="#e08cc8" strokeDasharray="1.500 1" strokeWidth="1.700" />
    <path d="M3 9.200h10" stroke="#e0b060" strokeDasharray="1.500 1" strokeWidth="1.700" />
    <path d="M3 11.800h10" stroke="#80c860" strokeDasharray="1.500 1" strokeWidth="1.700" />
  </svg>,
  <svg width="16" height="16" viewBox="0 0 16 16">
    <rect x=".5" y=".5" width="15" height="15" fill="#71b43a" stroke="#a8d77c" />
    <path d="M3 4l5-1.500L13 4c0 5-1 7-5 9.500C4 11 3 9 3 4z" fill="#eaf5df" />
    <path d="M8 3v10M3 7.500h10" stroke="#71b43a" strokeWidth="1.300" />
  </svg>,
  <span className="flex h-[15px] w-[15px] items-center justify-center border border-[#8cd05e] bg-[#6fb84a] text-[#33422c]">
    <FaEvernote size={12} />
  </span>,
  <svg width="16" height="16" viewBox="0 0 16 16">
    <circle cx="8" cy="8" r="7.800" fill="#e8352e" />
    <path d="M8 3v10M3.500 6l9 4M12 4.500l-8 7" stroke="#fff" strokeWidth="1.800" strokeDasharray="3.500 2" />
  </svg>,
  <svg width="16" height="16" viewBox="0 0 16 16">
    <rect width="16" height="16" fill="#0e78dc" />
    <circle cx="8" cy="8" r="6.500" fill="#fff" />
    <path d="M2.500 8L6 5v2h4V5l3.500 3L10 11V9H6v2z" fill="#0e78dc" />
    <rect x="7" y="12" width="9" height="4" fill="#8fd012" />
  </svg>,
  <svg width="16" height="16" viewBox="0 0 16 16">
    <path d="M2 0h4v5h2v7H5v3H3v-3H0V5h2z" fill="#60656a" stroke="#c8ccd0" strokeWidth=".6" />
    <circle cx="10.500" cy="10.500" r="5.300" fill="#1b9e24" />
    <path d="M8 10.500l2 2.500 3-5" stroke="#fff" strokeWidth="1.600" fill="none" />
  </svg>,
  <svg width="16" height="16" viewBox="0 0 16 16">
    <path d="M2 1v15" stroke="#fff" strokeWidth="1.600" />
    <path d="M3 2c3-1 4 0 6 1s3 1 6 0l-2 6c-2 1-4 0-5-.5S5 8 3 8.500z" fill="#fff" stroke="#314847" strokeWidth=".6" />
  </svg>,
  <svg width="16" height="16" viewBox="0 0 16 16">
    <path d="M1.800 1v3M4.800 1v3" stroke="#fff" strokeWidth="1.300" />
    <path d="M0.500 4.500h5.600v3l-1.800 2v5H2.300v-5L0.500 7.500z" fill="#fff" />
    <path d="M8.500 3.500h6v11h-6zM10 1.800h3" stroke="#fff" fill="none" strokeWidth="1.500" />
    <path d="M10.500 6h2v6.500h-2z" fill="#fff" />
  </svg>,
  <svg width="16" height="12" viewBox="0 0 16 12">
    <path d="M1.500 9v3M5 7.500V12M8.500 5v7M12 2.500V12M15 0v12" stroke="#fff" strokeWidth="2.200" />
  </svg>,
  <svg width="16" height="14" viewBox="0 0 16 14">
    <path d="M0 4.500h3L7.500 0v14L3 9.500H0z" fill="#fff" />
    <path d="M9.500 4.500q2 2.500 0 5M11.500 3q3 4 0 8M13.500 1.500q4 5.500 0 11" stroke="#fff" fill="none" strokeWidth="1.100" />
  </svg>,
];

function Taskbar() {
  return (
    <div className="flex h-10 items-center border-t border-[#6a8988] bg-linear-to-r from-[#7fa2a1] via-[#789a99] to-[#5f8584]">
      <div className="ml-[-1px] flex">
        {apps.map((app, i) => (
          <div key={i} className={"flex shrink-0 justify-center " + (i === 0 ? "w-[51px]" : "w-[62px]")}>
            <div
              className={
                "flex h-[39px] w-[59px] items-center justify-center " +
                (app.state === "active" ? "border border-white/80 bg-white/45" : app.state === "open" ? "border border-white/40 bg-white/20" : "")
              }
            >
              {app.icon}
            </div>
          </div>
        ))}
      </div>
      <div className="mr-[13px] ml-auto flex">
        {trayIcons.map((icon, i) => (
          <div key={i} className="flex h-9 w-6 items-center justify-center">
            {icon}
          </div>
        ))}
      </div>
      <div className="mr-[17px] w-[61px] text-center text-[11.500px] leading-[17px] tracking-[-0.250px] whitespace-nowrap text-white">
        9:00
        <br />
        09/07/2018
      </div>
    </div>
  );
}

export default function App() {
  return (
    <div className={"h-[1080px] w-[1920px] overflow-hidden bg-white " + UI}>
      <TabBar />
      <NavBar />
      <BookmarksBar />
      <Page />
      <Taskbar />
    </div>
  );
}
